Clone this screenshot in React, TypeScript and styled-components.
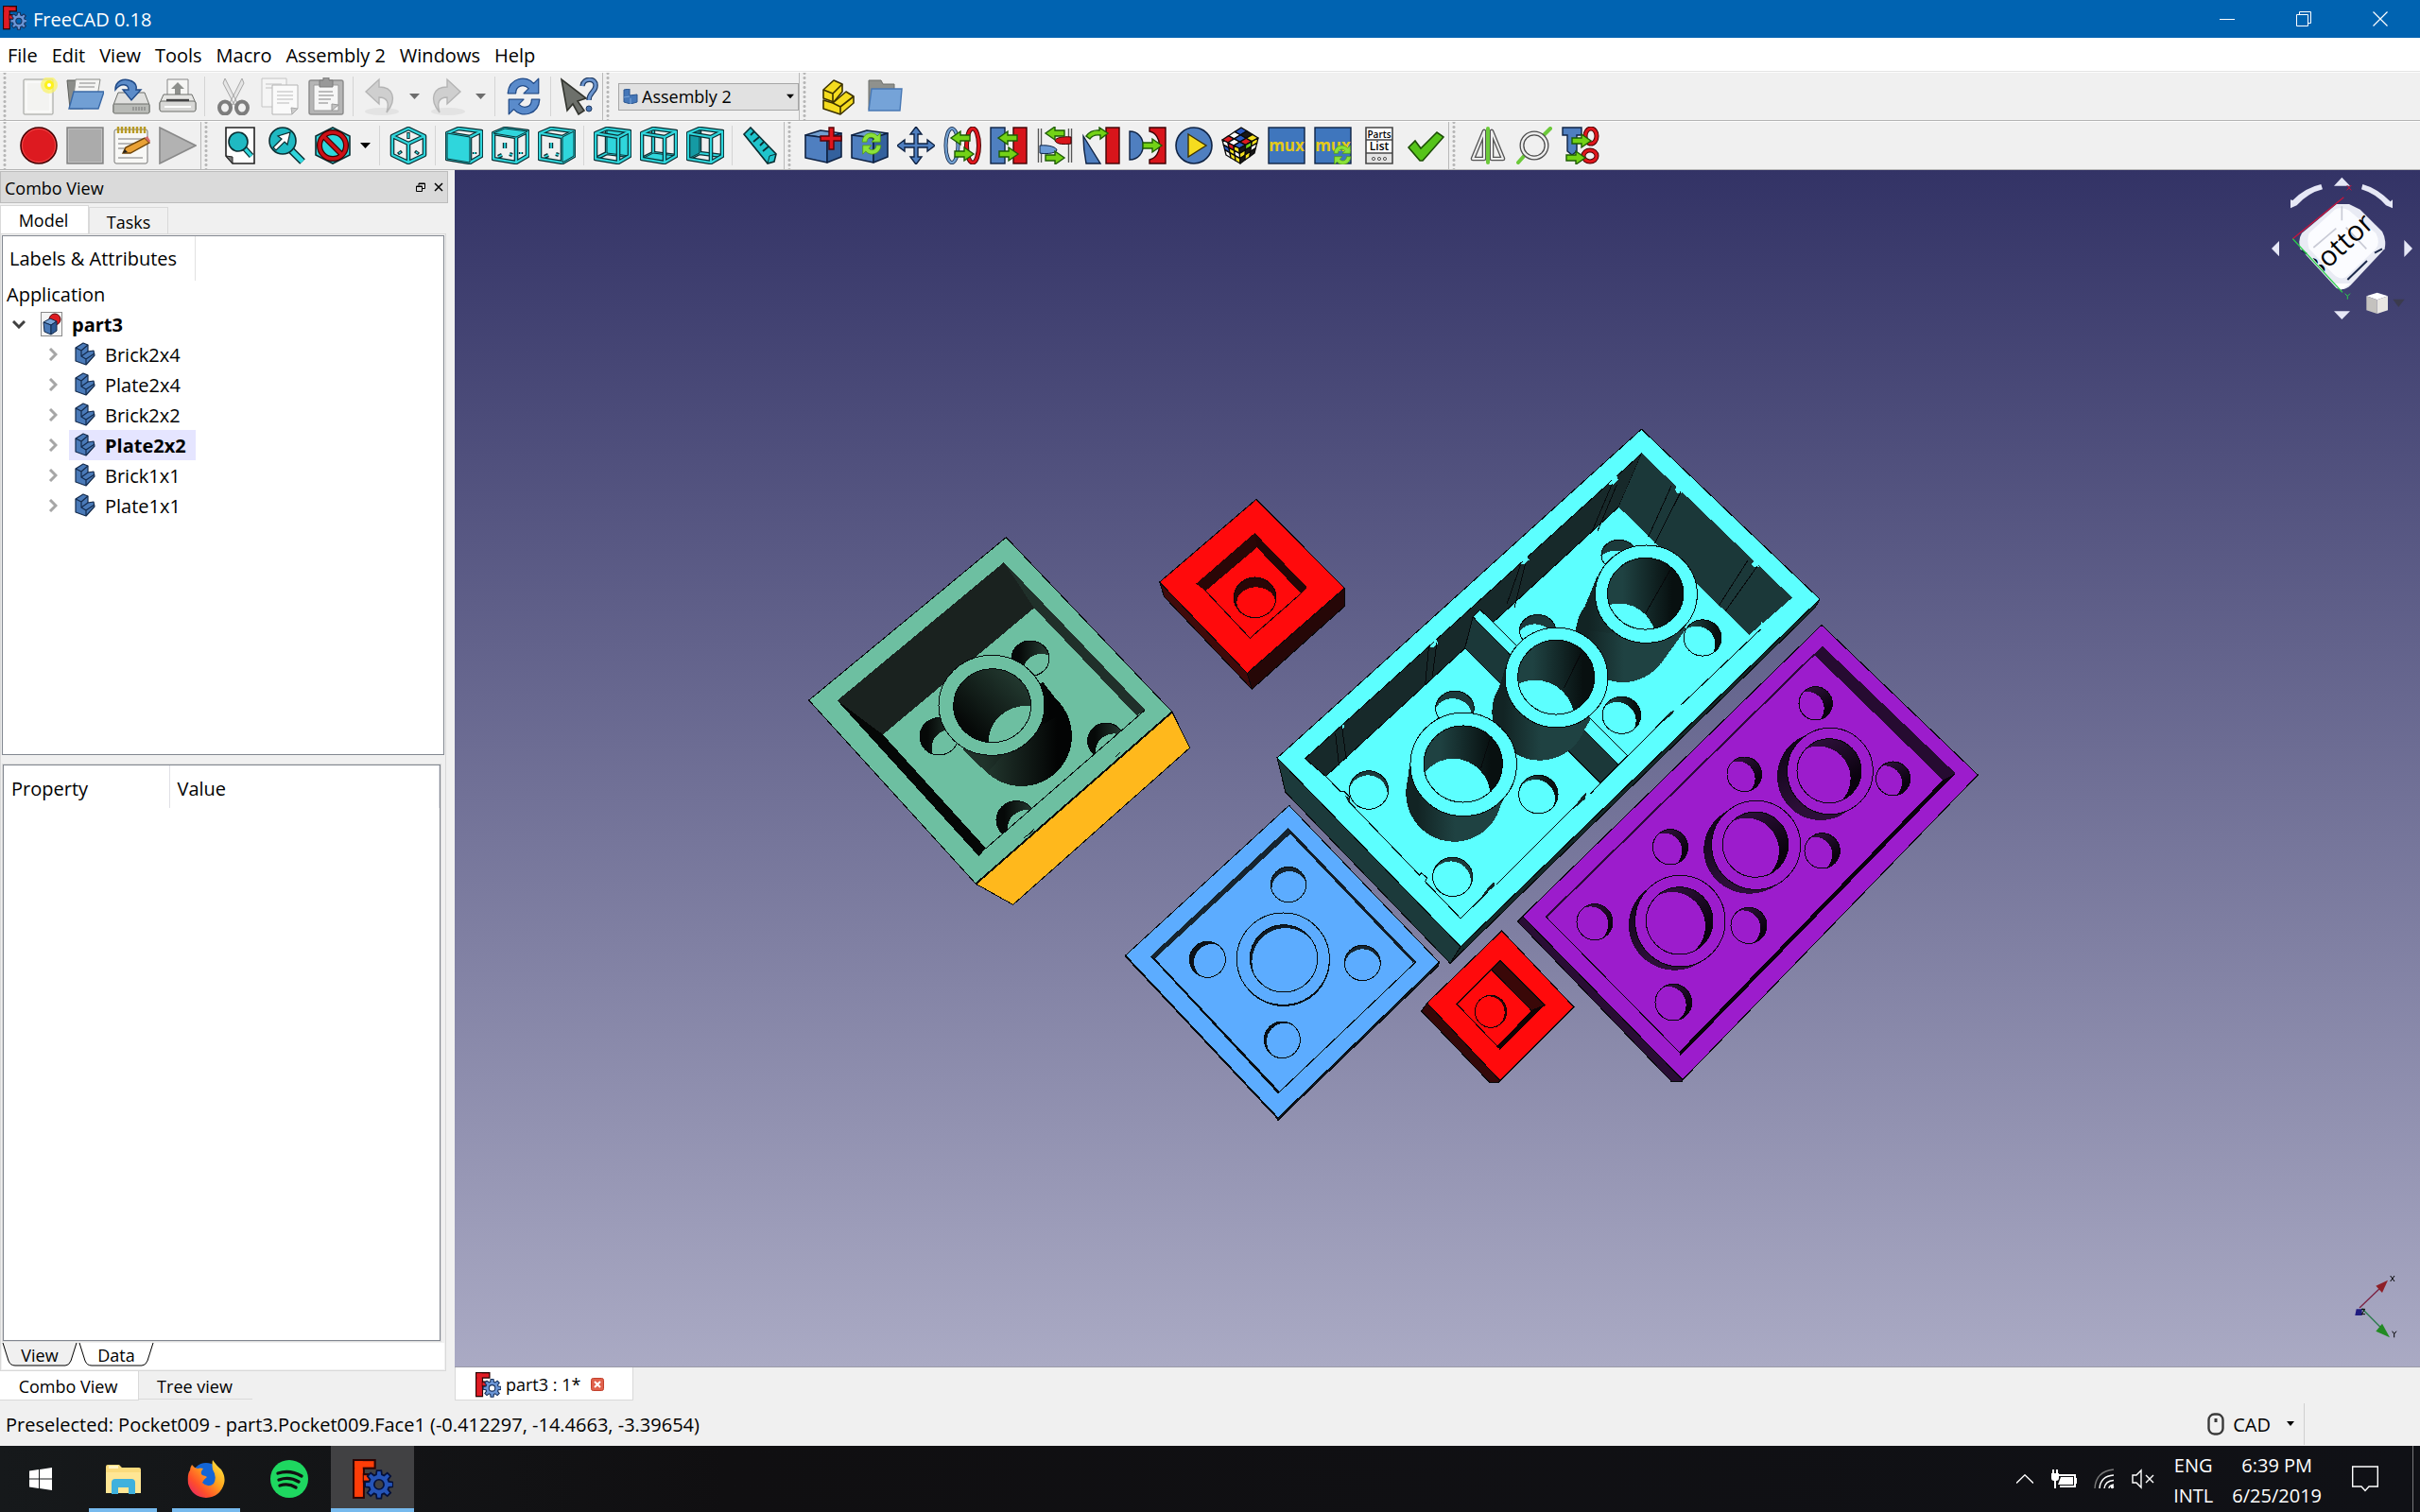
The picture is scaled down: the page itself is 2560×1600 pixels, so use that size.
import React, { useId, useState } from 'react';
import styled, { createGlobalStyle, css } from 'styled-components';

const GlobalStyle = createGlobalStyle`
  *, *::before, *::after { box-sizing: border-box; }
  body { margin: 0; background: #f0f0f0; color: #000; font-family: "Open Sans", "Noto Sans", sans-serif; font-size: 20px; }
  button, select { font: inherit; color: inherit; border: 0; background: none; padding: 0; margin: 0; }
  svg { display: block; flex: none; }
`;

const INK = '#0b2f33';
const CY = '#2fd6dc';
const BLUE = '#4f7fc0';
const NAVY = '#0f2344';
const LIME = '#73d216';
const LIME_D = '#1d5c05';

/* ---------- window frame ---------- */

const Window = styled.div`
  min-height: 100vh;
  display: flex;
  flex-direction: column;
`;
const TitleBar = styled.header`
  height: 40px;
  display: flex;
  align-items: center;
  padding-right: 2px;
  background: #0063b1;
  color: #fff;
`;
const TitleText = styled.h1`
  flex: 1;
  margin: 0;
  padding: 2px 0 0 7px;
  font-size: 20px;
  font-weight: 400;
  line-height: 40px;
`;
const CaptionButton = styled.button`
  width: 81px;
  height: 40px;
  display: grid;
  place-items: center;
`;
const MenuBar = styled.nav`
  height: 36px;
  display: flex;
  align-items: center;
  gap: 15px;
  padding: 3px 8px 0;
  background: #fff;
  border-bottom: 1px solid #e4e4e4;
`;
const MenuItem = styled.button`
  line-height: 28px;
`;

/* ---------- toolbars ---------- */

const ToolRow = styled.div`
  height: 52px;
  display: flex;
  border-top: 1px solid #fcfcfc;
  border-bottom: 1px solid #b4b4b4;
`;
const ToolGroup = styled.div`
  display: flex;
  align-items: center;
  padding-left: 16px;
  border-right: 1px solid #b9b9b9;
  background: radial-gradient(circle, #b5b5b5 1px, transparent 2px) 3px 3px / 4px 5px repeat-y;
  &:last-child { border-right-color: transparent; }
`;
const ToolButton = styled.button<{ $narrow?: boolean }>`
  width: ${(p) => (p.$narrow ? 21 : 49)}px;
  height: 48px;
  display: grid;
  place-items: center;
`;
const Divider = styled.span`
  width: 10px;
  height: 42px;
  background: linear-gradient(#d4d4d4, #d4d4d4) 4px 0 / 1px 100% no-repeat;
`;
const SelectBox = styled.label`
  position: relative;
  width: 191px;
  height: 29px;
  color: #000;
`;
const SelectIcon = styled.span`
  position: absolute;
  left: 5px;
  top: 6px;
`;
const SelectArrow = styled.span`
  position: absolute;
  right: 5px;
  top: 11px;
  pointer-events: none;
`;
const Select = styled.select`
  appearance: none;
  width: 100%;
  height: 29px;
  padding: 0 24px;
  font-size: 18px;
  line-height: 27px;
  background: #e1e1e1;
  border: 1px solid #a6a6a6;
`;

/* ---------- side panel ---------- */

const Main = styled.main`
  flex: 1;
  display: grid;
  grid-template-columns: 481px minmax(0, 1fr);
`;
const Side = styled.aside`
  display: flex;
  flex-direction: column;
  padding: 1px 7px 0 0;
  font-size: 18px;
`;
const DockHeader = styled.div`
  height: 34px;
  display: flex;
  align-items: center;
  gap: 9px;
  padding: 0 4px;
  background: #dadada;
  border: 1px solid #bcbcbc;
`;
const DockTitle = styled.h2`
  flex: 1;
  margin: 0;
  padding-top: 2px;
  font-size: 18px;
  font-weight: 400;
`;
const IconButton = styled.button`
  width: 10px;
  height: 10px;
`;
const TabRow = styled.div`
  height: 30px;
  margin-top: 2px;
  display: flex;
  align-items: flex-end;
`;
const Tab = styled.button<{ $on?: boolean }>`
  height: ${(p) => (p.$on ? 30 : 28)}px;
  width: ${(p) => (p.$on ? 94 : 84)}px;
  padding: ${(p) => (p.$on ? '0 2px 0 0' : '2px 0 0')};
  background: ${(p) => (p.$on ? '#fff' : '#f0f0f0')};
  border: 1px solid #d9d9d9;
  border-bottom: 0;
`;
const Pane = styled.div`
  flex: 1;
  width: 472px;
  display: flex;
  flex-direction: column;
  padding: 1px;
  border: 1px solid #d9d9d9;
`;
const TreeFrame = styled.section`
  flex: 551 0 0;
  background: #fff;
  border: 1px solid #828790;
  font-size: 20px;
`;
const TreeHeader = styled.div`
  width: 204px;
  height: 47px;
  padding-left: 7px;
  line-height: 48px;
  white-space: nowrap;
  border-right: 1px solid #e2e2e2;
`;
const TreeRoot = styled.div`
  height: 30px;
  padding-left: 4px;
  line-height: 30px;
`;
const TreeList = styled.ul`
  margin: 0;
  padding: 0;
  list-style: none;
`;
const TreeRow = styled.li<{ $level: number }>`
  height: 32px;
  display: flex;
  align-items: center;
  padding-left: ${(p) => (p.$level ? 44 : 10)}px;
`;
const Twisty = styled.button<{ $level: number }>`
  width: ${(p) => (p.$level ? 26 : 24)}px;
  height: 32px;
  display: flex;
  align-items: center;
`;
const TreeLabel = styled.button<{ $bold?: boolean; $hot?: boolean }>`
  height: 32px;
  display: flex;
  align-items: center;
  gap: 10px;
  padding: 0 10px 0 6px;
  background: ${(p) => (p.$hot ? '#e5e5ff' : 'transparent')};
  ${(p) => p.$bold && css`font-weight: 700;`}
`;
const PropertyFrame = styled.section`
  flex: 611 0 0;
  margin: 10px 4px 2px 1px;
  background: #fff;
  border: 1px solid #828790;
  outline: 1px solid #dcdcdc;
  font-size: 20px;
`;
const PropertyTable = styled.table`
  width: 100%;
  border-collapse: collapse;
  table-layout: fixed;
`;
const PropertyHead = styled.th`
  height: 45px;
  padding: 3px 8px 0;
  font-weight: 400;
  text-align: left;
  border-right: 1px solid #e0e0e6;
  &:first-child { width: 175px; }
`;
const SlantTabs = styled.div`
  height: 28px;
  display: flex;
  gap: 1px;
  background: #fff;
`;
const SlantTab = styled.button`
  position: relative;
  width: 80px;
  height: 27px;
  line-height: 27px;
`;
const SlantShape = styled.svg`
  position: absolute;
  inset: 0;
`;
const SlantText = styled.span`
  position: relative;
`;
const DockTabs = styled.div`
  height: 31px;
  display: flex;
`;
const DockTab = styled.button<{ $on?: boolean }>`
  width: ${(p) => (p.$on ? 147 : 120)}px;
  height: ${(p) => (p.$on ? 31 : 30)}px;
  padding: 2px 2px 0 0;
  background: ${(p) => (p.$on ? '#fff' : '#f0f0f0')};
  border-bottom: 1px solid #d9d9d9;
  border-right: ${(p) => (p.$on ? '1px solid #d9d9d9' : '0')};
`;

/* ---------- document area ---------- */

const Documents = styled.div`
  display: flex;
  flex-direction: column;
  min-width: 0;
`;
const Viewport = styled.div`
  position: relative;
  flex: 1;
  min-height: 0;
  overflow: hidden;
  background: linear-gradient(#333366, #aaaac4);
  border-bottom: 1px solid #9a9aa8;
`;
const Scene = styled.svg`
  position: absolute;
  inset: 0;
  width: 100%;
  height: 100%;
`;
const NavCube = styled.svg`
  position: absolute;
  top: 0;
  right: 0;
`;
const AxisCross = styled.svg`
  position: absolute;
  right: 20px;
  bottom: 26px;
`;
const DocTabs = styled.div`
  height: 35px;
  display: flex;
`;
const DocTab = styled.div`
  width: 189px;
  display: flex;
  align-items: center;
  gap: 5px;
  padding: 2px 0 0 21px;
  background: #fff;
  border: 1px solid #d9d9d9;
  border-top: 0;
  font-size: 18px;
`;
const CloseTab = styled.button`
  width: 14px;
  height: 14px;
  margin-left: 6px;
`;

/* ---------- status bar and taskbar ---------- */

const StatusBar = styled.footer`
  height: 48px;
  display: flex;
  align-items: center;
  justify-content: space-between;
  padding: 2px 122px 0 6px;
`;
const NavStyle = styled.button`
  height: 44px;
  display: flex;
  align-items: center;
  gap: 9px;
  padding-right: 8px;
  border-right: 1px solid #d0d0d0;
`;
const Taskbar = styled.div`
  height: 70px;
  display: flex;
  background: linear-gradient(90deg, #16191b, #100f11 30%, #101116);
  color: #fff;
`;
const TaskButton = styled.button<{ $running?: boolean; $active?: boolean; $start?: boolean }>`
  width: ${(p) => (p.$start ? 86 : 88)}px;
  display: grid;
  place-items: center;
  background:
    linear-gradient(#76b9ed, #76b9ed) center bottom / ${(p) => (p.$active ? '100%' : '72px')} ${(p) => (p.$running ? 4 : 0)}px no-repeat,
    ${(p) => (p.$active ? '#414143' : 'transparent')};
`;
const Tray = styled.div`
  flex: 1;
  display: flex;
  align-items: center;
  justify-content: flex-end;
  gap: 18px;
  padding-right: 7px;
`;
const TrayText = styled.div`
  padding: 3px 0 0 2px;
  line-height: 32px;
  white-space: nowrap;
  text-align: center;
`;
const ActionCenter = styled.button`
  margin-left: 14px;
`;
const TrayEdge = styled.span`
  width: 1px;
  height: 70px;
  margin-left: 18px;
  background: #77777a;
`;

/* ---------- icons ---------- */

const Icon = ({ children, w = 40, h = 40, box }: { children: React.ReactNode; w?: number; h?: number; box?: string }) => (
  <svg width={w} height={h} viewBox={box ?? `0 0 ${w} ${h}`} aria-hidden="true">{children}</svg>
);

const gearPath = (cx: number, cy: number, r: number, teeth = 8) => {
  const pts: string[] = [];
  for (let i = 0; i < teeth; i++) {
    const a = (i / teeth) * Math.PI * 2;
    [[-0.28, 0.72], [-0.16, 1], [0.16, 1], [0.28, 0.72]].forEach(([d, k]) =>
      pts.push(`${(cx + Math.cos(a + d) * r * k).toFixed(1)} ${(cy + Math.sin(a + d) * r * k).toFixed(1)}`));
  }
  const q = r * 0.34;
  return `M${pts.join('L')}Z M${cx - q} ${cy}a${q} ${q} 0 1 0 ${2 * q} 0a${q} ${q} 0 1 0 ${-2 * q} 0Z`;
};

const Logo = ({ size, bright }: { size: number; bright?: boolean }) => (
  <Icon w={size} h={size} box="0 0 40 40">
    <g stroke="#2a0505" strokeWidth="2">
      <rect x="1" y="1" width="10" height="37" fill={bright ? '#ff3d08' : '#e01b24'} />
      <rect x="1" y="1" width="21" height="8" fill={bright ? '#ff3d08' : '#e01b24'} />
      <rect x="10" y="15" width="9" height="7" fill={bright ? '#ff3d08' : '#e01b24'} />
    </g>
    <rect x="2" y="2" width="8" height="35" fill={bright ? '#ff3d08' : '#e01b24'} />
    <path d={gearPath(26, 25, 14)} fill={bright ? '#2554b8' : '#6c96d6'} fillRule="evenodd" stroke={bright ? '#04103a' : '#16305c'} strokeWidth="1.6" />
  </Icon>
);

const Down = ({ color = '#000', w = 11 }: { color?: string; w?: number }) => (
  <Icon w={w} h={6} box="0 0 11 6"><path d="M0 0H11L5.5 6Z" fill={color} /></Icon>
);

const E = { A: '2,7', B: '14,2', C: '38,5', D: '26,11', a: '2,34', b: '14,28', c: '38,31', d: '26,38' } as const;
type Face = 'front' | 'top' | 'right' | 'rear' | 'bottom' | 'left';
const FACES: Record<Face, string> = {
  front: `${E.A} ${E.D} ${E.d} ${E.a}`,
  top: `${E.A} ${E.B} ${E.C} ${E.D}`,
  right: `${E.D} ${E.C} ${E.c} ${E.d}`,
  rear: `${E.B} ${E.C} ${E.c} ${E.b}`,
  bottom: `${E.a} ${E.b} ${E.c} ${E.d}`,
  left: `${E.A} ${E.B} ${E.b} ${E.a}`,
};
const ViewCube = ({ face }: { face: Face }) => {
  const hidden = face === 'rear' || face === 'bottom' || face === 'left';
  const back = hidden ? `M${E.B}L${E.b}L${E.a}M${E.b}L${E.c}` : 'M14 17V23M7 32L11 30M19 29L22 30M31 27V29';
  const front = `M${E.A}L${E.B}L${E.C}L${E.D}ZL${E.a}L${E.d}L${E.c}L${E.C}M${E.D}L${E.d}`;
  const fill = <polygon points={FACES[face]} fill={face === 'left' ? '#159aa4' : CY} stroke={INK} strokeWidth="1" />;
  return (
    <Icon>
      <g fill="none" strokeLinejoin="round">
        <path d={back} stroke={INK} strokeWidth="4.4" />
        <path d={back} stroke={CY} strokeWidth="1.8" />
        {hidden && fill}
        <path d={front} stroke={INK} strokeWidth="4.6" />
        <path d={front} stroke={CY} strokeWidth="2.2" />
        {!hidden && fill}
      </g>
    </Icon>
  );
};

const Arrow = ({ x, y, flip, s = 1 }: { x: number; y: number; flip?: boolean; s?: number }) => (
  <path transform={`translate(${x} ${y}) scale(${flip ? -s : s} ${s})`} d="M-10-3H0V-7L10 0L0 7V3H-10Z" fill={LIME} stroke={LIME_D} strokeWidth="1.4" />
);
const Cycle = ({ x, y, s, fill, stroke }: { x: number; y: number; s: number; fill: string; stroke: string }) => (
  <g transform={`translate(${x} ${y}) scale(${s})`} fill={fill} stroke={stroke} strokeWidth="1.2" strokeLinejoin="round">
    <path d="M-16 -3C-15 -19 3 -22 10 -13L15 -18V-3H0L5 -8C0 -13 -8 -11 -8 -3Z" />
    <path d="M16 3C15 19 -3 22 -10 13L-15 18V3H0L-5 8C0 13 8 11 8 3Z" />
  </g>
);
const SolidCube = () => (
  <g stroke={NAVY} strokeWidth="1.6" strokeLinejoin="round">
    <path d="M1 9L17 4L39 7L24 12Z" fill="#729fcf" />
    <path d="M1 9L24 12V38L1 33Z" fill={BLUE} />
    <path d="M24 12L39 7V32L24 38Z" fill="#34619d" />
  </g>
);

/* One side of the puzzle cube: nine stickers spread between its four corners. */
const Stickers = ({ corners, colors }: { corners: number[][]; colors: string[] }) => {
  const at = (u: number, v: number) => [0, 1].map((k) =>
    ((1 - u) * (1 - v) * corners[0][k] + u * (1 - v) * corners[1][k] + u * v * corners[2][k] + (1 - u) * v * corners[3][k]).toFixed(2)).join(',');
  return (
    <g stroke="#0a0a0a" strokeWidth="1.3" strokeLinejoin="round">
      {colors.map((color, i) => {
        const u = (i % 3) / 3;
        const v = Math.floor(i / 3) / 3;
        const t = 1 / 3;
        return <polygon key={i} points={`${at(u, v)} ${at(u + t, v)} ${at(u + t, v + t)} ${at(u, v + t)}`} fill={color} />;
      })}
    </g>
  );
};
const [Y, R, B, W, G, K] = ['#f5e01f', '#dd1a20', '#2858c0', '#ffffff', '#73d216', '#181818'];

const MuxPlate = () => (
  <>
    <rect x="1" y="1" width="38" height="38" fill="#3f76bd" stroke={NAVY} strokeWidth="1.4" />
    <text x="20" y="26" textAnchor="middle" fontFamily="Open Sans, sans-serif" fontWeight="700" fontSize="17" fill="#e5c918">mux</text>
  </>
);

const I: Record<string, React.ReactNode> = {
  new: <Icon><rect x="4" y="2" width="31" height="37" rx="1" fill="#f3f3f1" stroke="#9a9c98" /><path d="M7 5H32V36H7Z" fill="none" stroke="#fff" /><circle cx="31" cy="8" r="9" fill="#f9f36a" opacity=".75" /><circle cx="31" cy="8" r="5" fill="#fdf21c" /><circle cx="31" cy="8" r="2" fill="#fff" /></Icon>,
  open: <Icon><path d="M1 3H12L14 6H18V33H4Z" fill="#8b8d89" stroke="#5d5f5b" /><path d="M10 2H36L33 20H8Z" fill="#f4f4f2" stroke="#8a8c88" /><path d="M14 6H31M13 10H30" stroke="#aaa" strokeWidth="1.6" /><path d="M8 15H40L34 33H3Z" fill="#719fd4" stroke="#3a69a6" strokeWidth="1.4" /></Icon>,
  save: <Icon><path d="M6 16H34L39 29V37H1V29Z" fill="#e0e0de" stroke="#6a6c68" /><rect x="1" y="28" width="38" height="10" rx="1.5" fill="#b9bbb7" stroke="#6a6c68" /><path d="M22 31V35M25 31V35M28 31V35M31 31V35M34 31V35" stroke="#777" /><path d="M3 13C3 3 12 1 18 3C25 5 26 10 25 13H30L20 24L11 13H17C17 7 9 5 3 13Z" fill="#5b8bc8" stroke="#204a87" strokeWidth="1.4" /></Icon>,
  print: <Icon><path d="M9 2H31V22H9Z" fill="#f6f6f4" stroke="#888" /><path d="M20 5L27 12H23V18H17V12H13Z" fill="#8e908c" /><path d="M5 18H35L39 27V34H1V27Z" fill="#e6e6e4" stroke="#6e706c" /><rect x="1" y="25" width="38" height="11" rx="2" fill="#d8d8d6" stroke="#6e706c" /><path d="M8 24H32" stroke="#444" strokeWidth="2.4" /><path d="M6 31H34" stroke="#fff" strokeWidth="2" /></Icon>,
  cut: <Icon><path d="M11 1L24 27L21 29L9 6Z M29 1L16 27L19 29L31 6Z" fill="#e6e6e6" stroke="#a6a6a6" /><g fill="none" stroke="#7d7d7d" strokeWidth="4"><ellipse cx="11" cy="32" rx="6" ry="6.5" /><ellipse cx="29" cy="32" rx="6" ry="6.5" /></g></Icon>,
  copy: <Icon><path d="M1 1H27V31H1Z" fill="#f5f5f5" stroke="#c4c4c4" /><path d="M5 7H22M5 11H22" stroke="#d2d2d2" strokeWidth="1.6" /><path d="M12 8H39V33L33 39H12Z" fill="#fafafa" stroke="#b4b4b4" /><path d="M17 15H34M17 19H34M17 23H34M17 27H30" stroke="#cfcfcf" strokeWidth="1.6" /><path d="M39 33L32 32L33 39Z" fill="#ccc" stroke="#aaa" /></Icon>,
  paste: <Icon><rect x="2" y="3" width="36" height="36" rx="2" fill="#b5b5b5" stroke="#8a8a8a" strokeWidth="1.4" /><path d="M7 8H33V35H7Z" fill="#f6f6f6" stroke="#999" /><path d="M13 3H17V0H23V3H27V10H13Z" fill="#999" stroke="#7a7a7a" /><path d="M12 15H27M12 19H28M12 23H25M12 27H22" stroke="#bcbcbc" strokeWidth="1.8" /><path d="M33 29L26 28V35Z" fill="#c2c2c2" stroke="#999" /></Icon>,
  undo: <Icon><ellipse cx="20" cy="36" rx="18" ry="4" fill="#e3e3e3" /><path d="M3 15L17 2V10C31 10 37 22 25 37C28 27 26 21 17 21V28Z" fill="#cfcfcf" stroke="#b4b4b4" strokeWidth="1.4" /></Icon>,
  redo: <Icon><ellipse cx="20" cy="36" rx="18" ry="4" fill="#e3e3e3" /><path d="M33 15L19 2V10C5 10 -1 22 11 37C8 27 10 21 19 21V28Z" fill="#cfcfcf" stroke="#b4b4b4" strokeWidth="1.4" /></Icon>,
  refresh: <Icon><Cycle x={20} y={20} s={1.05} fill="#5a8bcb" stroke="#204a87" /></Icon>,
  whats: <Icon><path d="M1 2L7 35L13 28L19 39L25 35L18 25L27 22Z" fill="#6d706b" stroke="#33352f" strokeWidth="1.6" /><path d="M23 9C24 0 38 0 37 9C37 15 30 16 30 24" fill="none" stroke="#1f3a63" strokeWidth="5.4" /><path d="M23 9C24 0 38 0 37 9C37 15 30 16 30 24" fill="none" stroke="#6b95cf" strokeWidth="3" /><circle cx="30" cy="33" r="3" fill="#4a76b5" stroke="#1f3a63" /></Icon>,
  part: <Icon><g fill="#f5dc1f" stroke="#3c3200" strokeWidth="1.6" strokeLinejoin="round"><path d="M4 22V13L15 3L24 7V15L15 26Z" /><path d="M4 13L14 17L24 7M14 17V26" fill="none" /><path d="M4 24L14 27L28 15L36 20V27L22 39L4 33Z" /><path d="M14 27L22 31L36 20M22 31V39" fill="none" /></g></Icon>,
  group: <Icon><path d="M3 3H16L18 7H30V34H3Z" fill="#8f918d" stroke="#6d6f6b" /><path d="M6 12H38L36 35H3Z" fill="#75a3d8" stroke="#4878b4" strokeWidth="1.4" /></Icon>,
  record: <Icon><circle cx="20" cy="20" r="19" fill="#dd1a20" stroke="#4a0305" strokeWidth="1.6" /><circle cx="20" cy="20" r="17.5" fill="none" stroke="#f04a4a" /></Icon>,
  stop: <Icon><rect x="1" y="1" width="38" height="38" fill="#ababab" stroke="#7f7f7f" strokeWidth="1.4" /><rect x="2.5" y="2.5" width="35" height="35" fill="none" stroke="#c0c0c0" /></Icon>,
  macro: <Icon><rect x="2" y="3" width="35" height="36" rx="2" fill="#f8f8f6" stroke="#777" /><path d="M6 0V7M10 0V7M14 0V7M18 0V7M22 0V7M26 0V7M30 0V7M34 0V7" stroke="#b99b25" strokeWidth="2.4" /><path d="M6 13H32M6 18H28M6 23H24M6 33H32" stroke="#b8b8b8" strokeWidth="1.8" /><path d="M11 28L14 22L34 12L39 17L19 28Z" fill="#e9a136" stroke="#6b4208" strokeWidth="1.4" /><path d="M34 12L37 10L40 15L39 17Z" fill="#d76a6a" /><path d="M11 28L13 24L16 27Z" fill="#222" /></Icon>,
  play: <Icon><path d="M1 1L39 20L1 39Z" fill="#b2b2b2" stroke="#8a8a8a" strokeWidth="1.6" /></Icon>,
  fit: <Icon><path d="M5 1H35V39H12L5 31Z" fill="#fdfdfd" stroke="#222" strokeWidth="1.6" /><path d="M5 31L12 32V39Z" fill="#777" stroke="#222" /><path d="M23 21L32 31" stroke={INK} strokeWidth="6" /><path d="M23 21L32 31" stroke={CY} strokeWidth="3.4" /><circle cx="18" cy="16" r="10" fill="#1fb9c2" stroke={INK} strokeWidth="1.6" /></Icon>,
  zoom: <Icon><path d="M24 24L37 37" stroke={INK} strokeWidth="8" /><path d="M24 24L37 37" stroke={CY} strokeWidth="5" /><circle cx="16" cy="15" r="14" fill="#1fb9c2" stroke={INK} strokeWidth="1.6" /><path d="M6 22L15 13L11 10L24 6L21 19L18 16L9 25Z" fill="#fff" stroke={INK} strokeWidth="1.2" /></Icon>,
  style: <Icon><path d="M20 1L38 10V30L20 39L2 30V10Z" fill={CY} stroke={INK} strokeWidth="1.6" /><g fill="none"><circle cx="20" cy="20" r="14" stroke="#3c0202" strokeWidth="6" /><path d="M10 10L30 30" stroke="#3c0202" strokeWidth="6" /><circle cx="20" cy="20" r="14" stroke="#cc1016" strokeWidth="3.6" /><path d="M10 10L30 30" stroke="#cc1016" strokeWidth="3.6" /></g></Icon>,
  iso: <Icon><g fill="none" strokeLinejoin="round"><path d="M20 2L37 10V30L20 38L3 30V10ZM3 10L20 18L37 10M20 18V38" stroke={INK} strokeWidth="4.6" /><path d="M20 2L37 10V30L20 38L3 30V10ZM3 10L20 18L37 10M20 18V38" stroke={CY} strokeWidth="2.2" /><path d="M20 6V13M9 29L13 26M31 29L27 26" stroke={INK} strokeWidth="3.4" /><path d="M20 7V12M10 28L12 27M30 28L28 27" stroke={CY} strokeWidth="1.6" /></g></Icon>,
  measure: <Icon><path d="M2 8L9 1L36 29L34 37L27 39Z" fill="#1fc4cc" stroke={INK} strokeWidth="1.6" /><path d="M2 8L27 39L29 31L36 29" fill="none" stroke={INK} /><path d="M13 5L9 9M18 11L12 16M23 16L19 20M28 21L22 26" stroke={INK} strokeWidth="1.8" /></Icon>,
  addpart: <Icon><SolidCube /><path d="M26 1H31V10H39V15H31V24H26V15H17V10H26Z" fill="#e0161c" stroke="#5a0306" strokeWidth="1.4" /></Icon>,
  updpart: <Icon><SolidCube /><Cycle x={22} y={18} s={0.62} fill="#8be23a" stroke="#4e9a06" /></Icon>,
  move: <Icon><path d="M20 0L26 8H22V18H32V14L40 20L32 26V22H22V32H26L20 40L14 32H18V22H8V26L0 20L8 14V18H18V8H14Z" fill={BLUE} stroke={NAVY} strokeWidth="1.4" /></Icon>,
  circ: <Icon><g fill="none"><ellipse cx="9" cy="20" rx="6.5" ry="18" stroke={NAVY} strokeWidth="4" /><ellipse cx="9" cy="20" rx="6.5" ry="18" stroke="#729fcf" strokeWidth="2.4" /><ellipse cx="31" cy="20" rx="6.5" ry="18" stroke="#4a0305" strokeWidth="5" /><ellipse cx="31" cy="20" rx="6.5" ry="18" stroke="#e0161c" strokeWidth="3" /></g><Arrow x={18} y={12} flip /><Arrow x={22} y={29} /></Icon>,
  plane: <Icon><rect x="1" y="1" width="15" height="38" fill={BLUE} stroke={NAVY} strokeWidth="1.4" /><rect x="25" y="1" width="14" height="38" fill="#d8151b" stroke="#3d0204" strokeWidth="1.4" /><Arrow x={19} y={12} flip /><Arrow x={20} y={29} /></Icon>,
  axial: <Icon><path d="M4 2V38M36 2V38" stroke="#555" strokeWidth="4.4" /><path d="M4 2V38M36 2V38" stroke="#ddd" strokeWidth="2" /><path d="M4 20C14 19 22 22 22 25C20 29 8 29 4 28Z" fill="#6b9bd6" stroke={NAVY} /><path d="M37 11C28 10 20 12 20 15C22 19 30 19 37 18Z" fill="#d8151b" stroke="#3d0204" /><Arrow x={20} y={7} flip /><Arrow x={20} y={33} /></Icon>,
  angle: <Icon><path d="M1 10L19 39H4Q1 24 1 10Z" fill={BLUE} stroke={NAVY} strokeWidth="1.4" /><rect x="25" y="1" width="14" height="38" fill="#d8151b" stroke="#3d0204" strokeWidth="1.4" /><path d="M4 10Q9 3 18 4V1L27 7L19 13V9Q11 8 8 13Z" fill={LIME} stroke={LIME_D} strokeWidth="1.4" /></Icon>,
  sphere: <Icon><path d="M1 5C20 5 20 35 1 35Z" fill={BLUE} stroke={NAVY} strokeWidth="1.4" /><path d="M22 1H39V39H22V35C36 32 36 8 22 5Z" fill="#d8151b" stroke="#3d0204" strokeWidth="1.4" /><Arrow x={25} y={20} /></Icon>,
  solve: <Icon><circle cx="20" cy="20" r="19" fill={BLUE} stroke={NAVY} strokeWidth="1.6" /><path d="M14 8L33 20L14 32Z" fill="#f5dc1f" stroke="#3c3200" strokeWidth="1.4" /></Icon>,
  dof: (
    <Icon>
      <Stickers corners={[[1, 14], [21, 1], [39, 12], [19, 23]]} colors={[R, W, B, W, B, K, B, R, Y]} />
      <Stickers corners={[[1, 14], [19, 23], [20, 39], [5, 30]]} colors={[W, R, Y, B, Y, W, W, Y, Y]} />
      <Stickers corners={[[19, 23], [39, 12], [35, 28], [20, 39]]} colors={[K, G, Y, Y, K, W, K, Y, K]} />
    </Icon>
  ),
  mux: <Icon><MuxPlate /></Icon>,
  muxupd: <Icon><MuxPlate /><Cycle x={30} y={30} s={0.56} fill="#8be23a" stroke="#4e9a06" /></Icon>,
  parts: <Icon><path d="M6 1H34V39H6ZM6 14H34M6 28H34" fill="#fff" stroke="#444" strokeWidth="1.6" /><rect x="7" y="29" width="26" height="9" fill="#e4e4e4" /><text x="20" y="12" textAnchor="middle" fontFamily="Open Sans, sans-serif" fontSize="10" fontWeight="600">Parts</text><text x="20" y="25" textAnchor="middle" fontFamily="Open Sans, sans-serif" fontSize="12" fontWeight="600">List</text><g fill="none" stroke="#555"><circle cx="14" cy="34" r="1.6" /><circle cx="20" cy="34" r="1.6" /><circle cx="26" cy="34" r="1.6" /></g></Icon>,
  check: <Icon><path d="M2 22L9 15L15 23L32 6L39 11L17 36H14Z" fill="#56c41a" stroke="#1c4d06" strokeWidth="1.6" /></Icon>,
  mirror: <Icon><path d="M16 5V34H4ZM24 5V34H36Z" fill="none" stroke="#555" strokeWidth="4.6" strokeLinejoin="round" /><path d="M16 5V34H4ZM24 5V34H36Z" fill="none" stroke="#eee" strokeWidth="2" strokeLinejoin="round" /><path d="M20 2V38" stroke="#6cc93a" strokeWidth="4" strokeLinecap="round" /></Icon>,
  axis: <Icon><path d="M3 38L11 29M29 10L37 2" stroke="#6cc93a" strokeWidth="4" strokeLinecap="round" /><circle cx="20" cy="20" r="13" fill="none" stroke="#4d4d4d" strokeWidth="5" /><circle cx="20" cy="20" r="13" fill="none" stroke="#eee" strokeWidth="2.4" /></Icon>,
  screw: <Icon><path d="M1 1H21V9H16V26L11 30L6 26V9H1Z" fill={BLUE} stroke={NAVY} strokeWidth="1.4" /><g fill="none"><ellipse cx="31" cy="10" rx="6" ry="8" stroke="#4a0305" strokeWidth="5" /><ellipse cx="31" cy="10" rx="6" ry="8" stroke="#e0161c" strokeWidth="3" /><ellipse cx="30" cy="31" rx="7" ry="6" stroke="#4a0305" strokeWidth="5" /><ellipse cx="30" cy="31" rx="7" ry="6" stroke="#e0161c" strokeWidth="3" /></g><Arrow x={21} y={15} /><Arrow x={15} y={33} /></Icon>,
};

const Body = () => (
  <Icon w={22} h={26}>
    <g fill="#4a7ab8" stroke="#132a4c" strokeWidth="1.2" strokeLinejoin="round">
      <path d="M1 6L9 1L14 3V10L20 9L21 14L12 24L1 20Z" />
      <path d="M1 6L7 9L14 3M7 9V15L12 18L21 12M7 15L14 10M12 18V24" fill="none" />
    </g>
  </Icon>
);
const DocIcon = () => (
  <Icon w={23} h={26}>
    <rect x="0.5" y="0.5" width="22" height="25" fill="#f4f4f4" stroke="#8b8b8b" />
    <circle cx="15" cy="8" r="6" fill="#dd1a20" stroke="#5a0306" />
    <g stroke="#132a4c" strokeLinejoin="round"><path d="M3 11L10 7L17 10L11 14Z" fill="#7aa6d8" /><path d="M3 11L11 14V24L4 21Z" fill="#4a7ab8" /><path d="M11 14L17 10V20L11 24Z" fill="#2f5a94" /></g>
  </Icon>
);

/* ---------- 3D scene ---------- */

type EllipseProps = { c: [number, number]; r: [number, number] };
const line = { stroke: '#07090b', strokeWidth: 1, vectorEffect: 'non-scaling-stroke' as const };

/* A round pocket: a dark wall, and the lit floor shifted by the perspective. */
const Pocket = ({ c, r, shift, color, wall, floor }: EllipseProps & { shift: [number, number]; color: string; wall: string; floor?: [number, number] }) => {
  const id = useId();
  const f = floor ?? r;
  return (
    <g>
      <clipPath id={id}><ellipse cx={c[0]} cy={c[1]} rx={r[0]} ry={r[1]} /></clipPath>
      <ellipse cx={c[0]} cy={c[1]} rx={r[0]} ry={r[1]} fill={wall} />
      <ellipse clipPath={`url(#${id})`} cx={c[0] + shift[0]} cy={c[1] + shift[1]} rx={f[0]} ry={f[1]} fill={color} />
      <ellipse cx={c[0]} cy={c[1]} rx={r[0]} ry={r[1]} fill="none" {...line} />
    </g>
  );
};

/* A hollow post: its base, the hull up to the rim, the rim and the bore. */
const Post = ({ base, hull, rim, bore, color, side, wall, shift, floor }: {
  base: EllipseProps; hull?: string; rim: EllipseProps; bore: EllipseProps; color: string; side: string; wall: string; shift: [number, number]; floor?: [number, number];
}) => (
  <g>
    <g fill={side}>
      <ellipse cx={base.c[0]} cy={base.c[1]} rx={base.r[0]} ry={base.r[1]} />
      {hull && <polygon points={hull} />}
    </g>
    <ellipse cx={rim.c[0]} cy={rim.c[1]} rx={rim.r[0]} ry={rim.r[1]} fill={color} {...line} />
    <Pocket c={bore.c} r={bore.r} shift={shift} color={color} wall={wall} floor={floor} />
  </g>
);

const GREEN = '#6dbfa1';
const GreenBrick = () => (
  <g transform="translate(840 540) scale(.33333)">
    <polygon points="1200,640 1256,754 695,1252 577,1186" fill="#ffb81c" {...line} />
    <polygon points="673,86 1200,640 577,1186 47,603" fill={GREEN} {...line} />
    <polygon points="666,165 762,310 282,712 137,604" fill="#1a221f" />
    <polygon points="666,165 1114,634 1087,652 762,310" fill="#20302a" />
    <polygon points="137,604 282,712 609,1073 586,1098" fill="#050706" />
    <Pocket c={[750, 470]} r={[60, 56]} shift={[36, 42]} color={GREEN} wall="url(#gWall)" />
    <Pocket c={[460, 718]} r={[61, 59]} shift={[38, 36]} color={GREEN} wall="url(#gWall)" />
    <Pocket c={[990, 732]} r={[58, 57]} shift={[25, 34]} color={GREEN} wall="url(#gWall)" />
    <Pocket c={[705, 983]} r={[63, 60]} shift={[35, 28]} color={GREEN} wall="url(#gWall)" />
    <polygon points="604,1080 1114,634 1180,640 586,1165" fill={GREEN} />
    <path d="M609 1073L1114 634" {...line} />
    <path d="M577 1186L1200 640" {...line} strokeWidth={2} />
    <Post base={{ c: [722, 716], r: [160, 160] }} hull="790,545 862,640 722,716 612,833 535,760 628,620"
      rim={{ c: [627, 619], r: [168, 159] }} bore={{ c: [629, 620], r: [123, 117] }}
      color={GREEN} side="url(#gSide)" wall="url(#gBore)" shift={[106, 116]} floor={[118, 115]} />
  </g>
);

const CYAN = '#5cffff';
const CyanBrick = () => (
  <g transform="translate(1340 440) scale(.38265)">
    <polygon points="29,946 536,1468 507,1514 52,1041" fill="#1c3a3b" {...line} />
    <polygon points="536,1468 1529,507 1515,532 507,1514" fill="#142929" {...line} />
    <polygon points="1036,37 1529,507 536,1468 29,946" fill={CYAN} {...line} />
    <polygon points="1037,104 973,252 163,997 106,948" fill="#17292a" {...line} />
    <polygon points="1037,104 1453,503 1334,606 973,252" fill="#1b3839" />
    <path d="M163 997L205 1040L213 1038L228 1052V1068L422 1270L428 1264L443 1278L438 1288L536 1390L610 1318M636 1295L870 1062M895 1045L1120 818M1145 800L1366 590" fill="none" {...line} />
    <path d="M592 1333L612 1305L628 1288L630 1300ZM845 1090L868 1058L884 1040L880 1060ZM1093 848L1116 818L1128 815L1120 826ZM216 1050L230 1058L228 1072Z" fill="#142929" />
    <path d="M945 190L966 162L972 178L958 190ZM702 412L718 388L726 398L712 410ZM450 640L468 618L474 630L458 642ZM205 866L212 852L216 862ZM1128 205L1136 190L1148 214L1136 214ZM1340 410L1350 400L1362 418L1348 418ZM1366 590L1368 570L1382 576L1390 562L1400 566L1378 598Z" fill={CYAN} />
    <path d="M955 188L897 325M968 190L915 318M702 412L664 520M715 410L685 530M448 640L438 745M470 628L458 722M190 878L200 968M208 860L220 950M1145 210L1073 352M1118 195L1055 335M1357 415L1268 540M1330 400L1250 525" fill="none" {...line} />
    <polygon points="570,556 972,965 922,1015 548,642" fill="#1b3839" {...line} />
    <polygon points="590,536 998,940 972,965 570,556" fill={CYAN} {...line} />
    <Pocket c={[1205, 614]} r={[52, 50]} shift={[-17, 18]} color={CYAN} wall="url(#cBore)" />
    <Pocket c={[981, 828]} r={[53, 51]} shift={[-13, 15]} color={CYAN} wall="url(#cBore)" />
    <Pocket c={[751, 1047]} r={[54, 53]} shift={[-8, 12]} color={CYAN} wall="url(#cBore)" />
    <Pocket c={[282, 1035]} r={[54, 53]} shift={[-2, 12]} color={CYAN} wall="#1c3a3b" />
    <Pocket c={[514, 1275]} r={[55, 54]} shift={[-5, 11]} color={CYAN} wall="#1c3a3b" />
    <Pocket c={[974, 385]} r={[49, 42]} shift={[-12, 30]} color={CYAN} wall="#1c3a3b" />
    <Pocket c={[749, 594]} r={[50, 44]} shift={[-8, 26]} color={CYAN} wall="#1c3a3b" />
    <Pocket c={[520, 809]} r={[53, 48]} shift={[-6, 21]} color={CYAN} wall="#1c3a3b" />
    <Post base={{ c: [985, 605], r: [131, 132] }} hull="913,445 854,590 985,605 1090,685 1160,588 1049,493"
      rim={{ c: [1049, 493], r: [141, 135] }} bore={{ c: [1047, 492], r: [105, 99] }}
      color={CYAN} side="url(#cSide)" wall="url(#cBore)" shift={[-72, 130]} floor={[101, 103]} />
    <Post base={{ c: [755, 820], r: [132, 133] }} hull="662,690 624,805 755,820 870,882 895,840 801,724"
      rim={{ c: [801, 724], r: [142, 138] }} bore={{ c: [800, 723], r: [106, 103] }}
      color={CYAN} side="url(#cSide)" wall="url(#cBore)" shift={[-58, 115]} floor={[108, 107]} />
    <Post base={{ c: [518, 1043], r: [133, 135] }} hull="397,950 385,1043 518,1043 640,1090 675,1020 544,964"
      rim={{ c: [544, 964], r: [147, 143] }} bore={{ c: [543, 963], r: [109, 106] }}
      color={CYAN} side="url(#cSide)" wall="url(#cBore)" shift={[-27, 92]} floor={[103, 107]} />
    <path d="M1118 422L1048 545M870 655L822 752M618 890L592 975" fill="none" {...line} />
  </g>
);

const PURPLE = '#9c1ccc';
const purplePockets: [number, number, number, number, number][] = [
  [992, 313, 53, -26, 16], [766, 538, 55, -21, 14], [1238, 552, 54, -26, 13], [531, 769, 56, -19, 12],
  [1013, 781, 56, -24, 12], [291, 1007, 57, -14, 8], [780, 1018, 57, -20, 9], [541, 1262, 58, -18, 8],
];
const PurplePlate = () => (
  <g transform="translate(1590 640) scale(.33333)">
    <polygon points="62,989 570,1508 568,1514 535,1514 46,1005" fill="#290d34" {...line} />
    <polygon points="1011,64 1507,540 570,1508 62,989" fill={PURPLE} {...line} />
    <polygon points="1014,131 1436,535 1396,556 987,158" fill="#260b31" />
    <polygon points="1436,535 563,1432 560,1418 1396,556" fill="#08020b" />
    <path d="M987 158L137 991" {...line} strokeWidth={2} stroke="#2c0a3a" />
    <path d="M137 991L563 1424" {...line} />
    {purplePockets.map(([x, y, r, dx, dy]) => (
      <Pocket key={`${x}-${y}`} c={[x, y]} r={[r, r]} shift={[dx, dy]} color={PURPLE} wall="url(#pWall)" />
    ))}
    <Post base={{ c: [1008, 545], r: [138, 139] }} rim={{ c: [1038, 528], r: [136, 137] }} bore={{ c: [1035, 527], r: [102, 102] }}
      color={PURPLE} side="url(#pSide)" wall="url(#pWall)" shift={[-34, 24]} />
    <Post base={{ c: [782, 777], r: [145, 140] }} rim={{ c: [803, 763], r: [141, 141] }} bore={{ c: [801, 761], r: [104, 104] }}
      color={PURPLE} side="url(#pSide)" wall="url(#pWall)" shift={[-29, 20]} />
    <Post base={{ c: [545, 1017], r: [146, 143] }} rim={{ c: [562, 1004], r: [143, 145] }} bore={{ c: [560, 1003], r: [106, 107] }}
      color={PURPLE} side="url(#pSide)" wall="url(#pWall)" shift={[-24, 16]} />
  </g>
);

const SKY = '#5cacff';
const RED = '#ff0a0c';
const BluePlate = () => (
  <g transform="translate(1180 840) scale(.33333)">
    <polygon points="1027,535 1025,546 516,1036 508,1026" fill="#101c2a" {...line} />
    <polygon points="551,37 1027,535 515,1030 31,514" fill={SKY} {...line} />
    <path d="M31 514L515 1030" {...line} strokeWidth={2} />
    <polygon points="549,108 110,517 125,523 556,126" fill="#16242f" />
    <polygon points="549,108 954,533 944,536 553,126" fill="#111b26" />
    <polygon points="112,517 125,523 520,944 516,952" fill="#080c12" />
    <path d="M954 533L517 950" {...line} />
    <Pocket c={[549, 288]} r={[56, 56]} shift={[3, 14]} color={SKY} wall="#16242f" />
    <Pocket c={[292, 526]} r={[57, 57]} shift={[14, 8]} color={SKY} wall="#0b1118" />
    <Pocket c={[784, 537]} r={[57, 56]} shift={[0, 12]} color={SKY} wall="#16242f" />
    <Pocket c={[529, 781]} r={[57, 58]} shift={[8, 5]} color={SKY} wall="#0b1118" />
    <Post base={{ c: [534, 528], r: [147, 147] }} rim={{ c: [532, 524], r: [147, 146] }} bore={{ c: [534, 523], r: [107, 107] }}
      color={SKY} side="#0b1118" wall="#0f1a24" shift={[6, 10]} />
  </g>
);
const SmallRedPlate = () => (
  <g transform="translate(1180 840) scale(.33333)">
    <polygon points="989,664 1221,911 1216,916 1187,916 971,690" fill="#350808" {...line} />
    <polygon points="1226,435 1455,677 1221,911 989,664" fill={RED} {...line} />
    <polygon points="1221,530 1363,671 1320,688 1193,558" fill="#3a0808" {...line} />
    <polygon points="1363,671 1220,814 1213,800 1320,688" fill="#100202" />
    <path d="M1193 558L1083 667L1215 805" fill="none" {...line} />
    <Pocket c={[1191, 691]} r={[50, 51]} shift={[-6, 3]} color={RED} wall="#2a0505" />
  </g>
);
const RedBrick = () => (
  <g transform="translate(1215 515) scale(.33333)">
    <polygon points="35,303 313,592 328,643 50,350" fill="#400a0a" {...line} />
    <polygon points="313,592 622,322 622,380 328,643" fill="#260707" {...line} />
    <polygon points="342,40 622,322 313,592 35,303" fill={RED} {...line} />
    <polygon points="337,147 344,193 181,331 151,308" fill="#2a0606" />
    <polygon points="337,147 503,320 484,339 344,193" fill="#250505" />
    <path d="M181 331L322 481L484 339" fill="none" {...line} />
    <Pocket c={[338, 352]} r={[67, 64]} shift={[3, 15]} floor={[61, 48]} color={RED} wall="#2a0606" />
  </g>
);

const Gradient = ({ id, from, to, x2 = 1, y2 = 0 }: { id: string; from: string; to: string; x2?: number; y2?: number }) => (
  <linearGradient id={id} x1="0" y1={y2 < 0 ? 1 : 0} x2={x2} y2={Math.max(y2, 0)}><stop offset="0.2" stopColor={from} /><stop offset="0.85" stopColor={to} /></linearGradient>
);

const Model = () => (
  <Scene viewBox="481 180 2079 1266" preserveAspectRatio="xMidYMid slice" shapeRendering="crispEdges" role="img" aria-label="Bricks and plates seen from below">
    <defs>
      <Gradient id="gWall" from="#060908" to="#22352d" />
      <Gradient id="gBore" from="#060908" to="#22382f" y2={-1} />
      <Gradient id="gSide" from="#20332b" to="#030404" />
      <Gradient id="cSide" from="#122424" to="#1f4242" x2={0.6} />
      <Gradient id="cBore" from="#1f4242" to="#081010" />
      <Gradient id="pWall" from="#2c0f38" to="#0a020e" y2={1} x2={0.6} />
      <Gradient id="pSide" from="#12051a" to="#2c0f38" y2={1} x2={0.4} />
    </defs>
    <GreenBrick />
    <RedBrick />
    <CyanBrick />
    <BluePlate />
    <PurplePlate />
    <SmallRedPlate />
  </Scene>
);

const Cube = () => (
  <NavCube width="160" height="180" viewBox="300 540 480 540" role="img" aria-label="Navigation cube">
    <clipPath id="cubeFace"><path d="M396 770L520 910L690 770L560 640Z" /></clipPath>
    <g fill="#e6e8f6">
      <path d="M532 563L558 590H507ZM532 1014L558 988H507ZM309 789L333 765V814ZM756 789L730 762V816Z" />
      <path d="M466 585L471 601Q425 612 389 652L369 661V634L376 636Q415 596 466 585ZM598 585L594 601Q640 615 672 652L693 661V634L686 640Q645 598 598 585Z" />
    </g>
    <path d="M515 648H555L590 665L660 735Q674 760 668 790L560 905Q540 925 515 915L400 790Q392 760 405 740Z" fill="#e9ebf4" />
    <path d="M428 740L510 665Q530 655 555 668L640 740Q655 770 640 790L545 880Q525 890 505 870L428 790Q420 760 428 740Z" fill="#fbfcff" />
    <path d="M442 786L514 725M545 722L610 790M532 655V700" stroke="#c9cbd6" strokeWidth="5" />
    <path d="M550 888L612 828M636 803L660 790M404 795L420 806" stroke="#1c2a4c" strokeWidth="6" />
    <path d="M506 900H560L530 920Z" fill="#fff" />
    <g clipPath="url(#cubeFace)">
      <text transform="translate(447 893) rotate(-43)" fontFamily="Open Sans, sans-serif" fontSize="88">Bottom</text>
    </g>
    <path d="M376 758L538 626" stroke="#c8143c" strokeWidth="4" />
    <path d="M376 758L534 928" stroke="#2ad04a" strokeWidth="4" />
    <path d="M548 588L562 604M562 588L548 604" stroke="#c8143c" strokeWidth="3" />
    <path d="M542 932L550 940L558 932M550 940V950" stroke="#2ad04a" strokeWidth="3" fill="none" />
    <path d="M610 940L644 929L678 940L644 952Z" fill="#fff" />
    <path d="M610 940L644 952V996L610 985Z" fill="#c4c2bf" />
    <path d="M678 940L644 952V996L678 985Z" fill="#e8e6e2" />
    <path d="M694 950H731L712 975Z" fill="#3b3b4e" />
  </NavCube>
);

const Axes = () => (
  <AxisCross width="54" height="74" viewBox="1280 80 162 222" role="img" aria-label="Axis cross">
    <path d="M1310 194L1385 122" stroke="#7c2040" strokeWidth="4" />
    <path d="M1318 196L1385 264" stroke="#2a7a4a" strokeWidth="4" />
    <path d="M1400 106L1362 124L1382 146Z" fill="#8e1f27" />
    <path d="M1406 288L1382 244L1362 268Z" fill="#228a22" />
    <path d="M1300 198H1318V218H1296Z" fill="#201c80" />
    <path d="M1408 92L1421 110M1421 92L1408 110M1414 268L1420 277L1427 268M1420 277V288M1316 198H1327L1317 214H1328" stroke="#000" strokeWidth="3" fill="none" />
  </AxisCross>
);

/* ---------- data ---------- */

const menus = ['File', 'Edit', 'View', 'Tools', 'Macro', 'Assembly 2', 'Windows', 'Help'];
type Tool = [string, string];
const fileTools: (Tool | '|' | 'v')[] = [
  ['new', 'New'], ['open', 'Open'], ['save', 'Save'], ['print', 'Print'], '|',
  ['cut', 'Cut'], ['copy', 'Copy'], ['paste', 'Paste'], '|',
  ['undo', 'Undo'], 'v', ['redo', 'Redo'], 'v', '|', ['refresh', 'Refresh'], '|', ['whats', "What's this?"],
];
const assemblyTools: Tool[] = [
  ['addpart', 'Import part'], ['updpart', 'Update parts'], ['move', 'Move part'], ['circ', 'Circular edge'], ['plane', 'Plane'],
  ['axial', 'Axial'], ['angle', 'Angle'], ['sphere', 'Spherical'], ['solve', 'Solve'], ['dof', 'Degrees of freedom'],
  ['mux', 'Mux'], ['muxupd', 'Update mux'], ['parts', 'Parts list'], ['check', 'Check'],
];
const bodies = ['Brick2x4', 'Plate2x4', 'Brick2x2', 'Plate2x2', 'Brick1x1', 'Plate1x1'];

const Tools = ({ items, arrow = '#000' }: { items: (Tool | '|' | 'v')[]; arrow?: string }) => (
  <>
    {items.map((t, i) =>
      t === '|' ? <Divider key={i} />
        : t === 'v' ? <ToolButton key={i} $narrow aria-label="More"><Down color={arrow} /></ToolButton>
          : <ToolButton key={i} aria-label={t[1]}>{I[t[0]]}</ToolButton>)}
  </>
);
const FaceButton = ({ face }: { face: Face }) => <ToolButton aria-label={`${face} view`}><ViewCube face={face} /></ToolButton>;

export default function App() {
  const [open, setOpen] = useState(true);
  return (
    <Window>
      <GlobalStyle />
      <TitleBar>
        <Icon w={28} h={28} box="-3 0 28 28"><Logo size={26} /></Icon>
        <TitleText>FreeCAD 0.18</TitleText>
        <CaptionButton aria-label="Minimize"><Icon w={16} h={16}><path d="M0 8.5H16" stroke="#fff" /></Icon></CaptionButton>
        <CaptionButton aria-label="Restore"><Icon w={16} h={16}><path d="M.5 3.5H12.5V15.5H.5ZM3.5 3V.5H15.5V12.5H13" fill="none" stroke="#fff" /></Icon></CaptionButton>
        <CaptionButton aria-label="Close"><Icon w={16} h={16}><path d="M.5 .5L15.5 15.5M15.5 .5L.5 15.5" stroke="#fff" strokeWidth="1.2" /></Icon></CaptionButton>
      </TitleBar>
      <MenuBar aria-label="Main menu">{menus.map((m) => <MenuItem key={m}>{m}</MenuItem>)}</MenuBar>

      <ToolRow role="toolbar" aria-label="File">
        <ToolGroup><Tools items={fileTools} arrow="#6d6d6d" /></ToolGroup>
        <ToolGroup>
          <SelectBox>
            <SelectIcon><Icon w={16} h={16}><path d="M1 1L7 0V7L15 6V14L8 16L1 14Z" fill="#4577b8" stroke="#2a558f" /><path d="M1 9L7 8M8 10V16" stroke="#7ba6da" /></Icon></SelectIcon>
            <Select aria-label="Workbench" defaultValue="Assembly 2"><option>Assembly 2</option></Select>
            <SelectArrow><Down w={8} /></SelectArrow>
          </SelectBox>
        </ToolGroup>
        <ToolGroup><Tools items={[['part', 'Create part'], ['group', 'Create group']]} /></ToolGroup>
      </ToolRow>
      <ToolRow role="toolbar" aria-label="View">
        <ToolGroup><Tools items={[['record', 'Record macro'], ['stop', 'Stop macro'], ['macro', 'Macros'], ['play', 'Run macro']]} /></ToolGroup>
        <ToolGroup>
          <Tools items={[['fit', 'Fit all'], ['zoom', 'Fit selection'], ['style', 'Draw style'], 'v', '|', ['iso', 'Isometric'], '|']} />
          <FaceButton face="front" /><FaceButton face="top" /><FaceButton face="right" />
          <Divider />
          <FaceButton face="rear" /><FaceButton face="bottom" /><FaceButton face="left" />
          <Tools items={['|', ['measure', 'Measure']]} />
        </ToolGroup>
        <ToolGroup><Tools items={assemblyTools} /></ToolGroup>
        <ToolGroup><Tools items={[['mirror', 'Mirror'], ['axis', 'Axis'], ['screw', 'Bolts']]} /></ToolGroup>
      </ToolRow>

      <Main>
        <Side>
          <DockHeader>
            <DockTitle>Combo View</DockTitle>
            <IconButton aria-label="Float"><Icon w={10} h={10}><path d="M.5 4H6.5V9.5H.5ZM3 3.500V1H9.500V6.500H7M3 1.500H9.500M.5 4.500H6.500" fill="none" stroke="#000" /></Icon></IconButton>
            <IconButton aria-label="Close panel"><Icon w={10} h={10}><path d="M1 1L9 9M9 1L1 9" stroke="#000" strokeWidth="1.5" /></Icon></IconButton>
          </DockHeader>
          <TabRow role="tablist"><Tab $on role="tab" aria-selected>Model</Tab><Tab role="tab">Tasks</Tab></TabRow>
          <Pane>
            <TreeFrame>
              <TreeHeader>Labels &amp; Attributes</TreeHeader>
              <TreeRoot>Application</TreeRoot>
              <TreeList>
                <TreeRow $level={0}>
                  <Twisty $level={0} aria-label="Toggle part3" onClick={() => setOpen(!open)}><Icon w={14} h={9}><path d="M1 1L7 7L13 1" fill="none" stroke="#404040" strokeWidth="3" /></Icon></Twisty>
                  <TreeLabel $bold><DocIcon />part3</TreeLabel>
                </TreeRow>
                {open && bodies.map((b) => (
                  <TreeRow key={b} $level={1}>
                    <Twisty $level={1} aria-label={`Expand ${b}`}><Icon w={14} h={14}><path d="M6 1L12 7L6 13" fill="none" stroke="#a6a6a6" strokeWidth="3" /></Icon></Twisty>
                    <TreeLabel $bold={b === 'Plate2x2'} $hot={b === 'Plate2x2'}><Body />{b}</TreeLabel>
                  </TreeRow>
                ))}
              </TreeList>
            </TreeFrame>
            <PropertyFrame>
              <PropertyTable><thead><tr><PropertyHead>Property</PropertyHead><PropertyHead>Value</PropertyHead></tr></thead></PropertyTable>
            </PropertyFrame>
            <SlantTabs role="tablist">
              {['View', 'Data'].map((t) => (
                <SlantTab key={t} role="tab">
                  <SlantShape width="80" height="26"><path d="M1 0L7 19Q9 24 14 24H67Q71 24 73 19L79 0" fill={t === 'View' ? '#f0f0f0' : '#fff'} stroke="#000" /></SlantShape>
                  <SlantText>{t}</SlantText>
                </SlantTab>
              ))}
            </SlantTabs>
          </Pane>
          <DockTabs role="tablist"><DockTab $on role="tab" aria-selected>Combo View</DockTab><DockTab role="tab">Tree view</DockTab></DockTabs>
        </Side>

        <Documents>
          <Viewport><Model /><Cube /><Axes /></Viewport>
          <DocTabs>
            <DocTab>
              <Logo size={27} />
              part3 : 1*
              <CloseTab aria-label="Close document"><Icon w={14} h={14}><rect x=".5" y=".5" width="13" height="13" rx="2" fill="#e0614c" stroke="#c2412c" /><path d="M4 4L10 10M10 4L4 10" stroke="#fff" strokeWidth="2" /></Icon></CloseTab>
            </DocTab>
          </DocTabs>
        </Documents>
      </Main>

      <StatusBar>
        <span>Preselected: Pocket009 - part3.Pocket009.Face1 (-0.412297, -14.4663, -3.39654)</span>
        <NavStyle>
          <Icon w={18} h={24}><rect x="1.500" y="1.500" width="15" height="21" rx="6" fill="none" stroke="#3a3a3a" strokeWidth="2.400" /><path d="M9 6V10" stroke="#3a3a3a" strokeWidth="3" /></Icon>
          CAD
          <Icon w={18} h={6}><path d="M8 0H16L12 5Z" fill="#000" /></Icon>
        </NavStyle>
      </StatusBar>

      <Taskbar>
        <TaskButton $start aria-label="Start"><Icon w={24} h={24}><path d="M0 3.500L10 2V11.500H0ZM11 1.900L24 0V11.500H11ZM0 12.500H10V22L0 20.500ZM11 12.500H24V24L11 22.100Z" fill="#fff" /></Icon></TaskButton>
        <TaskButton $running aria-label="File Explorer"><Icon w={38} h={32}><path d="M1 3Q1 1 3 1H15L18 4H36Q38 4 38 6V30H1Z" fill="#fadb7c" /><path d="M4 2H14V5H4Z" fill="#fff3c4" /><path d="M1 9H38V31H1Z" fill="#ffe694" /><path d="M7 32V20Q7 16 11 16H28Q32 16 32 20V32H25V25H14V32Z" fill="#3fb1dd" /></Icon></TaskButton>
        <TaskButton $running aria-label="Firefox"><Icon>
          <defs><linearGradient id="fox" x1="1" y1="0" x2="0" y2="1"><stop offset="0" stopColor="#fff34a" /><stop offset=".4" stopColor="#ffa41c" /><stop offset=".7" stopColor="#ff4f2a" /><stop offset="1" stopColor="#e0197a" /></linearGradient></defs>
          <circle cx="20" cy="18" r="15" fill="#1365d6" />
          <path d="M5 5Q7 8 11 9Q14 8 17 9Q13 13 16 16Q20 17 21 18Q18 20 16 24Q22 30 28 25Q32 18 27 10Q26 4 27 0Q32 7 36 10Q41 18 39 25Q35 39 20 40Q5 39 1 25Q0 14 3 11Q3 8 5 5Z" fill="url(#fox)" />
        </Icon></TaskButton>
        <TaskButton aria-label="Spotify"><Icon><circle cx="20" cy="20" r="20" fill="#1ed760" /><path d="M8 14Q21 10 33 17M9 21Q20 17 30 23M10 27Q19 24 27 29" fill="none" stroke="#111" strokeWidth="3.400" strokeLinecap="round" /></Icon></TaskButton>
        <TaskButton $running $active aria-label="FreeCAD"><Logo size={43} bright /></TaskButton>
        <Tray>
          <Icon w={18} h={10}><path d="M0 9.500L9 .8L18 9.500" fill="none" stroke="#fff" strokeWidth="1.400" /></Icon>
          <Icon w={28} h={20}><path d="M8 6H26V18H10" fill="none" stroke="#fff" strokeWidth="2" /><path d="M11 8H24V16H8ZM26 9H28V15H26ZM1 4H9V9Q9 12 6 12V20H4V12Q1 12 1 9ZM2 0H4V4H2ZM6 0H8V4H6Z" fill="#fff" /></Icon>
          <Icon w={22} h={22}><g fill="none" stroke="#fff" strokeWidth="1.400"><path d="M1 21Q2 3 21 1" stroke="#777" /><path d="M6 21Q7 8 21 7M11 21Q12 13 21 12.500" /><path d="M16 21Q16 18 21 17" /></g><circle cx="19.500" cy="19.500" r="1.700" fill="#fff" /></Icon>
          <Icon w={24} h={22}><path d="M1 7H5L10 2V20L5 15H1ZM15 7L23 15M23 7L15 15" fill="none" stroke="#fff" strokeWidth="1.400" /></Icon>
          <TrayText>ENG<br />INTL</TrayText>
          <TrayText>6:39 PM<br />6/25/2019</TrayText>
          <ActionCenter aria-label="Action center"><Icon w={28} h={28}><path d="M.7 1H27.300V22H18L14 26.500L10 22H.7Z" fill="none" stroke="#fff" strokeWidth="1.400" /></Icon></ActionCenter>
          <TrayEdge />
        </Tray>
      </Taskbar>
    </Window>
  );
}
